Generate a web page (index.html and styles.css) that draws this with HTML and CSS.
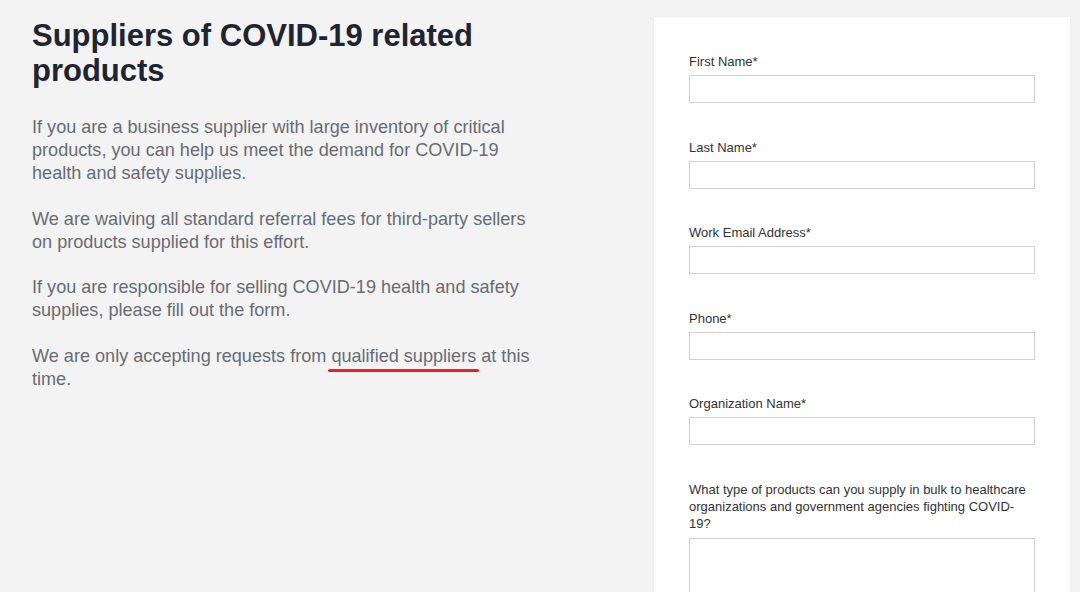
FILE: index.html
```html
<!doctype html>
<html>

<head>
    <title>Suppliers of COVID-19 related products</title>
    <meta charset="utf-8" />
    <meta name="viewport" content="width=device-width, initial-scale=1.0">
    <link rel="stylesheet" href="styles.css">
</head>

<body>
    <div class="page">
        <div class="intro">
            <h1>Suppliers of COVID-19 related products</h1>
            <p>If you are a business supplier with large inventory of critical products, you can help us meet the demand for COVID-19 health and safety supplies.</p>
            <p>We are waiving all standard referral fees for third-party sellers on products supplied for this effort.</p>
            <p>If you are responsible for selling COVID-19 health and safety supplies, please fill out the form.</p>
            <p>We are only accepting requests from <span class="marked">qualified suppliers</span> at this time.</p>
        </div>
        <form class="card">
            <div class="field">
                <label for="first">First Name*</label>
                <input id="first" name="first" class="input" />
            </div>
            <div class="field">
                <label for="last">Last Name*</label>
                <input id="last" name="last" class="input" />
            </div>
            <div class="field">
                <label for="email">Work Email Address*</label>
                <input id="email" name="email" class="input" />
            </div>
            <div class="field">
                <label for="phone">Phone*</label>
                <input id="phone" name="phone" class="input" />
            </div>
            <div class="field">
                <label for="org">Organization Name*</label>
                <input id="org" name="org" class="input" />
            </div>
            <div class="field">
                <label for="products">What type of products can you supply in bulk to healthcare organizations and government agencies fighting COVID-19?</label>
                <textarea id="products" name="products" class="input area"></textarea>
            </div>
        </form>
    </div>
</body>

</html>
```

FILE: styles.css
```css
body { background-color: #f3f3f4; font-family: "Liberation Sans", Arial, Helvetica, sans-serif; margin: 0; overflow: hidden; }
.page { display: flex; flex-direction: row; align-items: flex-start; }
.intro { width: 510px; padding: 18px 0 0 32px; }
h1 { color: #1f2430; font-size: 31px; line-height: 35px; font-weight: bold; margin: 0 0 28px 0; }
p { color: #686c72; font-size: 18.1px; line-height: 23px; margin: 0 0 22.5px 0; }
.marked { position: relative; }
.marked::after { content: ""; position: absolute; left: -3px; right: -3px; bottom: -6px; height: 3px; border-radius: 2px; background-color: #e82228; }
.card { margin: 17px 0 0 112px; width: 346px; padding: 36px 35px 0 35px; background-color: #fff; box-shadow: 0 0 2px rgba(0, 0, 0, 0.06); height: 539px; }
.field { display: flex; flex-direction: column; margin-bottom: 35.5px; }
label { color: #333; font-size: 13px; line-height: 17px; margin-bottom: 5px; }
.input { box-sizing: border-box; height: 28px; border: 1px solid #cfcfcf; background-color: #fff; margin: 0; padding: 4px; font-family: inherit; }
.area { height: 80px; margin-top: 1px; resize: none; }
```
